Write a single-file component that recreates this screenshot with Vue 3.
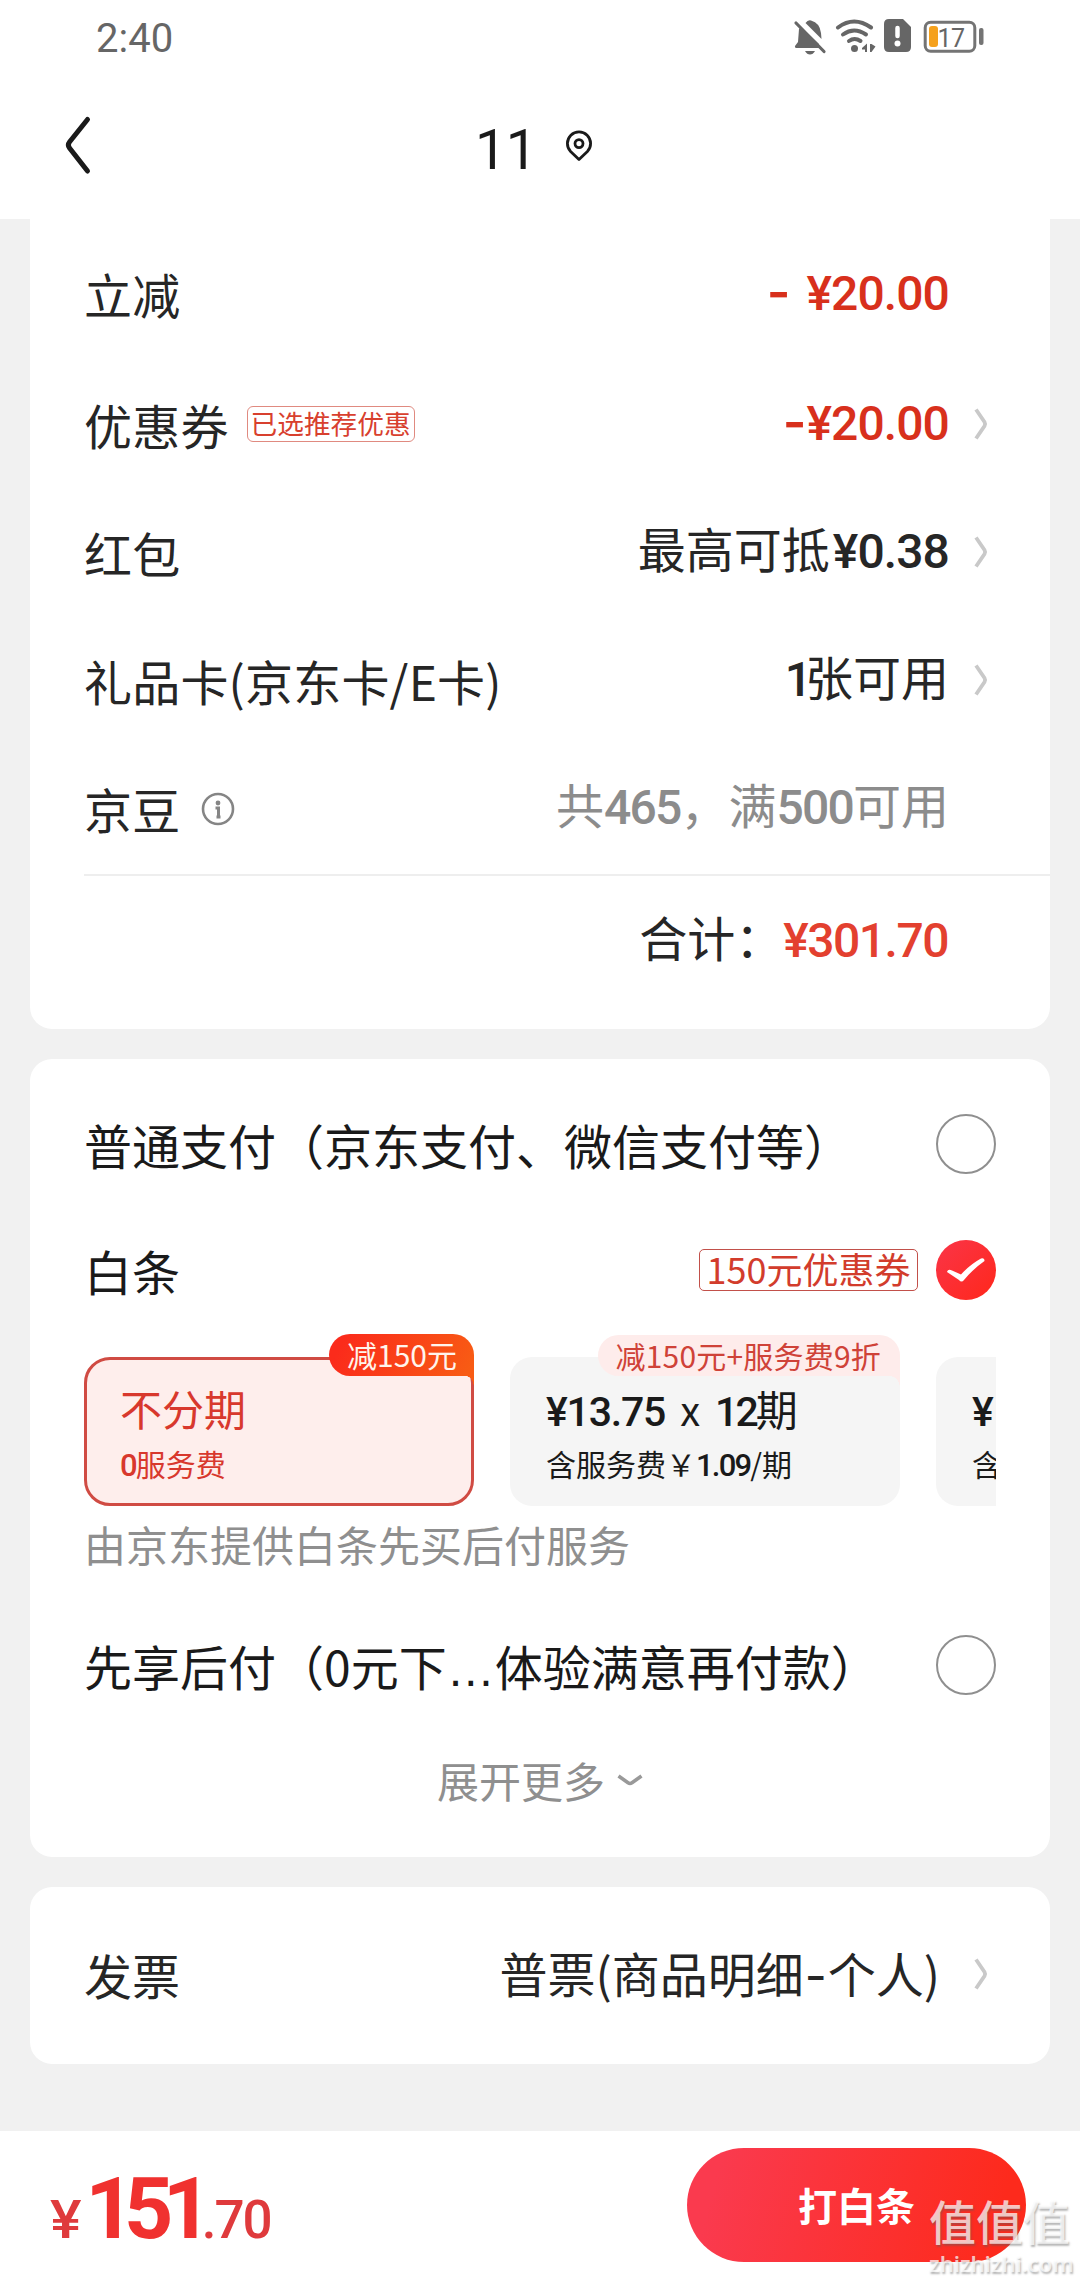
<script setup>
const discounts = [
  { label: '立减', parts: [{ n: '-', gap: 'minus wide' }, { n: '¥20.00' }], tone: 'red', first: true },
  { label: '优惠券', tag: '已选推荐优惠', parts: [{ n: '-', gap: 'minus slim' }, { n: '¥20.00' }], tone: 'red', arrow: true },
  { label: '红包', parts: [{ t: '最高可抵' }, { n: '¥0.38', gap: 'packet' }], arrow: true },
  { label: '礼品卡(京东卡/E卡)', parts: [{ n: '1', gap: 'one' }, { t: '张可用' }], arrow: true },
  { label: '京豆', info: true, parts: [{ t: '共' }, { n: '465', gap: 'count' }, { t: '，满' }, { n: '500', gap: 'count' }, { t: '可用' }], tone: 'gray' },
]
</script>

<template>
  <div class="page">
    <header class="top">
      <div class="status">
        <span class="clock">2:40</span>
        <svg class="sys" width="192" height="40" viewBox="792 16 192 40" fill="none">
          <g fill="#666">
            <path d="M801 27 L819 44 V48 H797 Q794.5 48 795 46 L798 42 L799 29 Z" />
            <path d="M805.500 23 Q808 19.500 811 20.500 Q820 23 821 33 L821.500 39 Z" />
            <path d="M805 51 H815 Q813 54.500 810 54.500 Q807 54.500 805 51Z" />
          </g>
          <path d="M796 23 L824 51.500" stroke="#666" stroke-width="3.200" stroke-linecap="round" />
          <g stroke="#666" stroke-width="4" stroke-linecap="round">
            <path d="M838 27.500 Q854 15.500 871 27.500" />
            <path d="M843 34.500 Q854 26.500 866 34.500" />
            <path d="M849 41 Q854.500 37 860.500 41" />
          </g>
          <circle cx="854.500" cy="48.500" r="3.500" fill="#666" />
          <path d="M862 48 L867 43.500 V52 H865 V49.500 H862Z M870 44 H871.500 L875.500 46.500 L871.500 52 H870Z" fill="#666" />
          <path d="M889 19 H903 L911 27 V47 Q911 52 906 52 H889 Q884 52 884 47 V24 Q884 19 889 19Z" fill="#666" />
          <path d="M897.500 28 V36" stroke="#fff" stroke-width="4.500" stroke-linecap="round" />
          <circle cx="897.500" cy="43.500" r="3" fill="#fff" />
          <rect x="925.200" y="22.200" width="49.600" height="29" rx="5.500" stroke="#747474" stroke-width="3" />
          <rect x="929" y="26" width="9" height="21" rx="3" fill="#f5a11d" />
          <rect x="979" y="28" width="4.500" height="17" rx="2" fill="#747474" />
          <text x="937.500" y="47" class="charge">17</text>
        </svg>
      </div>
      <div class="nav">
        <svg class="back" width="28" height="60" viewBox="0 0 28 60" fill="none" stroke="#1a1a1a" stroke-width="5" stroke-linecap="round">
          <path d="M23.500 4.500 L5.500 27 Q3.200 30 5.500 33 L23.500 56" />
        </svg>
        <span class="title">11</span>
        <svg class="pin" width="28" height="32" viewBox="0 0 28 32" fill="none" stroke="#1a1a1a" stroke-width="2.800" stroke-linejoin="round">
          <path d="M14 29.500 L5.600 21.500 A11.600 11.600 0 1 1 22.400 21.500 Z" />
          <circle cx="14" cy="13.600" r="4" />
        </svg>
      </div>
    </header>

    <main class="body">
      <section class="card discounts">
        <div v-for="row in discounts" :key="row.label" class="row" :class="{ first: row.first }">
          <span class="label">{{ row.label }}</span>
          <span v-if="row.tag" class="tag">{{ row.tag }}</span>
          <svg v-if="row.info" class="info" width="34" height="34" viewBox="0 0 34 34" fill="none" stroke="#858585">
            <circle cx="17" cy="17" r="15" stroke-width="2.600" />
            <circle cx="17" cy="11" r="2.400" fill="#858585" stroke="none" />
            <path d="M14.500 16 H17.500 V25 M15.500 25 H19.500" stroke-width="3" />
          </svg>
          <span class="value" :class="row.tone">
            <span v-for="(p, i) in row.parts" :key="i" :class="[p.n ? 'num' : '', p.gap]">{{ p.n || p.t }}</span>
          </span>
          <svg class="arrow" width="14" height="32" viewBox="0 0 14 32" fill="none">
            <path v-if="row.arrow" d="M2 1.500 L10.500 14 Q11.700 16 10.500 18 L2 30.500" stroke="#c9c9c9" stroke-width="3.800" />
          </svg>
        </div>
        <div class="total">
          <span>合计：</span><span class="num sum">¥301.70</span>
        </div>
      </section>

      <section class="card pay">
        <div class="option">
          <span class="label">普通支付（京东支付、微信支付等）</span>
          <span class="radio"></span>
        </div>
        <div class="option second">
          <span class="label">白条</span>
          <span class="coupon">150元优惠券</span>
          <svg class="checked" width="60" height="60" viewBox="0 0 60 60" fill="none">
            <defs>
              <linearGradient id="checkFill" x1="0" y1="0" x2="1" y2="1">
                <stop offset="0" stop-color="#fa3548" />
                <stop offset="1" stop-color="#ff271b" />
              </linearGradient>
            </defs>
            <circle cx="30" cy="30" r="30" fill="url(#checkFill)" />
            <path d="M11 32 Q12 28.500 16 30.500 L25 34.500 Q34 24.500 45 18.500 Q48.500 17.500 48.500 21 Q37 29 28 40 Q25.500 43 23 40 Z" fill="#fff" />
          </svg>
        </div>
        <div class="plans">
          <div class="plan active">
            <span class="badge hot">减150元</span>
            <div class="name">不分期</div>
            <div class="fee"><span class="fnum">0</span>服务费</div>
          </div>
          <div class="plan">
            <span class="badge soft">减150元+服务费9折</span>
            <div class="name"><span class="pnum">¥13.75</span><span class="times">x</span><span class="pnum term">12</span>期</div>
            <div class="fee">含服务费￥<span class="fnum">1.09</span>/期</div>
          </div>
          <div class="plan">
            <div class="name"><span class="pnum">¥</span></div>
            <div class="fee">含</div>
          </div>
        </div>
        <p class="note">由京东提供白条先买后付服务</p>
        <div class="option third">
          <span class="label">先享后付（0元下<span class="dots">…</span>体验满意再付款）</span>
          <span class="radio"></span>
        </div>
        <div class="more">
          <span>展开更多</span>
          <svg width="26" height="14" viewBox="0 0 26 14" fill="none" stroke="#999" stroke-width="3.600">
            <path d="M1.500 3 L11 9.700 Q13 11 15 9.700 L24.500 3" />
          </svg>
        </div>
      </section>

      <section class="card invoice">
        <div class="row">
          <span class="label">发票</span>
          <span class="value plain">普票(商品明细<span class="dash">-</span>个人)</span>
          <svg class="arrow" width="14" height="32" viewBox="0 0 14 32" fill="none">
            <path d="M2 1.500 L10.500 14 Q11.700 16 10.500 18 L2 30.500" stroke="#c9c9c9" stroke-width="3.800" />
          </svg>
        </div>
      </section>
    </main>

    <footer class="bar">
      <div class="price"><span class="small yen">¥</span><span class="big">151</span><span class="small">.70</span></div>
      <button class="submit">打白条</button>
      <div class="mark"><span class="zh">值值值</span><span class="site">zhizhizhi.com</span></div>
    </footer>
  </div>
</template>

<style>
body {
  margin: 0;
  background: #f1f1f1;
}
</style>

<style scoped>
.page {
  width: 1080px;
  height: 2280px;
  display: flex;
  flex-direction: column;
  overflow: hidden;
  background: #f1f1f1;
  color: #262626;
  font-family: "Noto Sans CJK SC", sans-serif;
  font-size: 48px;
  line-height: 60px;
  white-space: nowrap;
}
.top {
  height: 219px;
  flex: none;
  background: #fff;
}
.status {
  height: 76px;
  box-sizing: border-box;
  padding: 0 96px 0 96px;
  display: flex;
  align-items: center;
  justify-content: space-between;
}
.clock {
  margin-top: 2px;
  font: 400 40px/40px Roboto, sans-serif;
  color: #666;
}
.sys {
  margin-top: -4px;
}
.charge {
  font: 400 25px Roboto, sans-serif;
  letter-spacing: -0.5px;
  fill: #666;
}
.nav {
  height: 143px;
  display: flex;
  align-items: flex-start;
}
.back {
  margin: 39px 0 0 64px;
}
.title {
  margin: 44px 0 0 383px;
  font: 400 56px/60px Roboto, sans-serif;
  color: #1a1a1a;
  letter-spacing: -0.6px;
}
.pin {
  margin: 54px 0 0 28px;
}
.body {
  flex: 1;
  padding: 0 30px;
}
.card {
  background: #fff;
  border-radius: 22px;
}
.discounts {
  height: 810px;
  border-radius: 0 0 22px 22px;
}
.discounts .label {
  letter-spacing: 0.200px;
}
.row {
  height: 128px;
  padding: 0 62px 0 54px;
  display: flex;
  align-items: center;
}
.row.first {
  height: 135px;
  padding-top: 6px;
}
.value {
  margin-left: auto;
  margin-top: -5px;
}
.value.plain {
  margin-top: 0;
  margin-right: 9px;
}
.row.first .value {
  margin-top: -3px;
}
.red {
  color: #d8301c;
}
.gray {
  color: #8c8c8c;
}
.num {
  font-family: Roboto, sans-serif;
  font-weight: 500;
  letter-spacing: -0.900px;
}
.packet {
  padding-left: 3px;
}
.count {
  letter-spacing: -1.800px;
}
.one {
  letter-spacing: -7px;
}
.minus {
  font-family: Inter, sans-serif;
  font-weight: 600;
  font-size: 51px;
  line-height: 50px;
  letter-spacing: 0;
}
.wide {
  padding-right: 16px;
}
.arrow {
  margin-left: 25px;
}
.tag {
  box-sizing: border-box;
  width: 168px;
  height: 36px;
  margin: 0 0 0 18px;
  border: 1px solid #e08a80;
  border-radius: 6px;
  color: #d8402e;
  font-size: 26.700px;
  line-height: 31px;
  text-align: center;
}
.info {
  margin: 1px 0 0 21px;
}
.total {
  height: 60px;
  margin: 2px 0 0 54px;
  padding: 30px 102px 0 0;
  border-top: 2px solid #eee;
  display: flex;
  align-items: baseline;
  justify-content: flex-end;
}
.sum {
  color: #e3402f;
  letter-spacing: -1.500px;
}
.pay {
  height: 798px;
  margin-top: 30px;
}
.option {
  height: 60px;
  padding: 55px 54px 0 54px;
  display: flex;
  justify-content: space-between;
  color: #1a1a1a;
}
.option .label {
  flex: 1;
}
.option.second {
  padding-top: 66px;
}
.option.third {
  padding-top: 61px;
}
.radio {
  box-sizing: border-box;
  width: 60px;
  height: 60px;
  border: 2px solid #8f8f8f;
  border-radius: 50%;
}
.coupon {
  box-sizing: border-box;
  width: 219px;
  height: 42px;
  margin: 9px 18px 0 0;
  border: 1.500px solid #c2504a;
  border-radius: 5px;
  color: #d23c2c;
  font-size: 36px;
  line-height: 36px;
  text-align: center;
}
.plans {
  height: 173px;
  margin: 33px 54px 0 54px;
  padding-top: 24px;
  box-sizing: border-box;
  display: flex;
  gap: 36px;
  overflow: hidden;
}
.plan {
  position: relative;
  flex: none;
  box-sizing: border-box;
  width: 390px;
  height: 149px;
  padding: 21px 36px 0;
  border-radius: 22px;
  background: #f5f5f5;
  color: #1a1a1a;
}
.plan.active {
  padding: 18px 33px 0;
  border: 3px solid #d04b43;
  border-radius: 26px;
  background: #feeeec;
  color: #d8382d;
}
.name {
  height: 60px;
  font-size: 42px;
  line-height: 60px;
}
.fee {
  height: 40px;
  margin-top: 5px;
  font-size: 30px;
  line-height: 40px;
}
.pnum {
  font-family: Roboto, sans-serif;
  font-size: 41px;
  font-weight: 500;
  line-height: 50px;
  letter-spacing: -1.200px;
}
.term {
  letter-spacing: -3px;
}
.times {
  margin: 0 15px;
  font-size: 40px;
  line-height: 50px;
}
.fnum {
  font-family: Roboto, sans-serif;
  font-weight: 500;
  font-size: 31px;
  line-height: 30px;
  letter-spacing: -1.800px;
}
.badge {
  position: absolute;
  box-sizing: border-box;
  height: 42px;
  padding: 0 18px;
  font-size: 30px;
  line-height: 40px;
  border-radius: 22px 22px 0 22px;
}
.badge::after {
  content: "";
  position: absolute;
  right: 0;
  top: 100%;
  width: 10px;
  height: 12px;
}
.hot {
  top: -26px;
  right: -3px;
  padding: 0 17px 0 18px;
  color: #fff4ec;
  background: linear-gradient(115deg, #fb2b1b 10%, #f85b14 95%);
}
.hot::after {
  background: radial-gradient(ellipse 8px 12px at 0 100%, transparent 97%, #f85b14 100%);
  width: 8px;
}
.soft {
  top: -22px;
  right: 0;
  height: 41px;
  padding: 0 19px 0 18px;
  line-height: 41px;
  letter-spacing: 0.200px;
  color: #cf4238;
  background: #feeceb;
}
.soft::after {
  background: radial-gradient(ellipse 10px 12px at 0 100%, transparent 97%, #feeceb 100%);
}
.note {
  margin: 8px 0 0 54px;
  color: #8f8f8f;
  font-size: 42px;
  line-height: 60px;
}
.dots {
  font-family: "Liberation Sans", sans-serif;
}
.more {
  margin-top: 55px;
  display: flex;
  align-items: center;
  justify-content: center;
  gap: 12px;
  color: #8f8f8f;
  font-size: 42px;
}
.invoice {
  height: 177px;
  margin-top: 30px;
}
.invoice .row {
  height: 173px;
}
.dash {
  font-family: Inter, sans-serif;
  padding: 0 1px;
}
.bar {
  position: relative;
  height: 149px;
  flex: none;
  background: #fff;
  display: flex;
  justify-content: space-between;
}
.price {
  padding: 33px 0 0 50px;
  font-family: Roboto, sans-serif;
  font-weight: 700;
  line-height: 90px;
  color: #f0312f;
}
.small {
  font-size: 53px;
  font-weight: 500;
  letter-spacing: -2px;
  color: #df3a3c;
}
.yen {
  display: inline-block;
  transform: scaleX(1.12);
  transform-origin: left;
}
.big {
  margin-left: 9px;
  font-size: 86px;
  letter-spacing: -10.500px;
}
.submit {
  width: 339px;
  height: 114px;
  margin: 17px 54px 0 0;
  padding: 0 0 2px;
  border: 0;
  border-radius: 57px;
  background: linear-gradient(105deg, #fa3a4e 10%, #fd2a1c 90%);
  color: #fff;
  font: 700 39px/60px "Noto Sans CJK SC", sans-serif;
}
.mark {
  position: absolute;
  left: 929px;
  top: 59px;
  width: 150px;
  display: flex;
  flex-direction: column;
  color: rgba(255, 255, 255, 0.72);
  text-shadow: 1px 2px 2px rgba(90, 90, 90, 0.45);
}
.zh {
  font-size: 47px;
  font-weight: 500;
  line-height: 60px;
}
.site {
  font: 600 22px/26px "Noto Sans", sans-serif;
}
</style>
